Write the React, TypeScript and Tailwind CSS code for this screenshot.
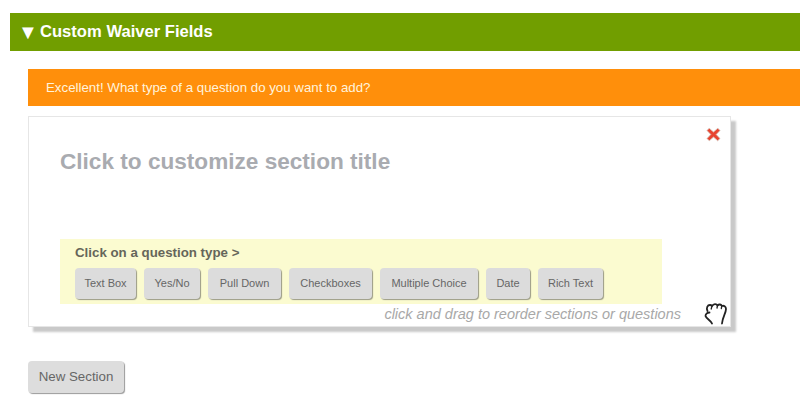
const questionTypes = [
  { label: 'Text Box', width: 'w-[61px]' },
  { label: 'Yes/No', width: 'w-[56px]' },
  { label: 'Pull Down', width: 'w-[73px]' },
  { label: 'Checkboxes', width: 'w-[83px]' },
  { label: 'Multiple Choice', width: 'w-[98px]' },
  { label: 'Date', width: 'w-[44px]' },
  { label: 'Rich Text', width: 'w-[65px]' },
];

function CloseIcon() {
  return (
    <svg className="absolute right-[9px] top-[10px]" width="15" height="15" viewBox="0 0 15 15">
      <path d="M3.2 1.2 7.500 5l4.300-3.800 2.200 2.400L10.200 7.500l3.800 4-2.300 2.300-4.200-3.700-4.200 3.700L1 11.500l3.800-4L1 3.600z" fill="#e8432f" stroke="#d3c4ba" strokeWidth="0.8" />
    </svg>
  );
}

function HandIcon() {
  return (
    <svg className="absolute right-[2px] top-[184px]" width="26" height="24" viewBox="0 0 26 24" fill="none" stroke="#222" strokeWidth="1.8" strokeLinecap="round" strokeLinejoin="round">
      <path d="M10 22.500C9.500 20 4 17.500 3.500 15c0-2 2-3.500 4-3.500" />
      <path d="M5.500 10C4 7 5.500 4 8 4c.8 0 1.500.3 2 1 1.500-2.500 4.500-2.500 5.500-.5 1.500-1.500 3.500-1.300 4.300.5 2-.8 4.200.5 4.200 3 0 4-3.500 8-4 14.500" />
      <path d="M10 5l-.8 3M15.500 4.500l-.5 2.500M19.800 5l-.5 2.500" strokeWidth="1.300" />
    </svg>
  );
}

export default function App() {
  return (
    <div className="h-[407px] w-[800px] overflow-hidden bg-white pl-[10px] pt-[13px] font-['Liberation_Sans',Arial,sans-serif]">
      <div className="flex h-[38px] items-center bg-[#719e00] pl-[8px] text-[16.6px] font-bold text-white">
        <span className="mr-[6px] w-[16px] text-[20px] leading-none">▼</span>
        <span>Custom Waiver Fields</span>
      </div>

      <div className="pl-[18px] pt-[18px]">
        <div className="flex h-[37px] items-center bg-[#ff8f0b] pl-[18px] text-[13.3px] text-[#fff3dd]">
          Excellent! What type of a question do you want to add?
        </div>

        <div className="relative mt-[10px] h-[211px] w-[703px] border border-[#e6e6e6] bg-white pl-[31px] pt-[32px] shadow-[5px_5px_2px_#c9c9c9]">
          <CloseIcon />
          <h2 className="text-[22.6px] font-bold leading-[26px] text-[#a9abb0]">Click to customize section title</h2>

          <div className="mt-[64px] h-[65px] w-[602px] bg-[#fbfbd0] pl-[15px] pt-[6px]">
            <p className="text-[13.3px] font-bold leading-[15px] text-[#66665a]">Click on a question type &gt;</p>
            <div className="mt-[8px] flex gap-[8px]">
              {questionTypes.map((q) => (
                <button
                  key={q.label}
                  className={`${q.width} h-[31px] rounded-[4px] bg-[#dcdcdc] text-center text-[11px] text-[#666] shadow-[1px_1px_1px_#9a9a86]`}
                >
                  {q.label}
                </button>
              ))}
            </div>
          </div>

          <p className="mr-[49px] mt-[1px] text-right text-[14.5px] italic leading-[18px] text-[#a8a8a8]">
            click and drag to reorder sections or questions
          </p>
          <HandIcon />
        </div>

        <button className="mt-[34px] h-[32px] w-[96px] rounded-[4px] bg-[#dddddd] text-center text-[13.3px] text-[#666] shadow-[1px_1px_1px_#999]">
          New Section
        </button>
      </div>
    </div>
  );
}
